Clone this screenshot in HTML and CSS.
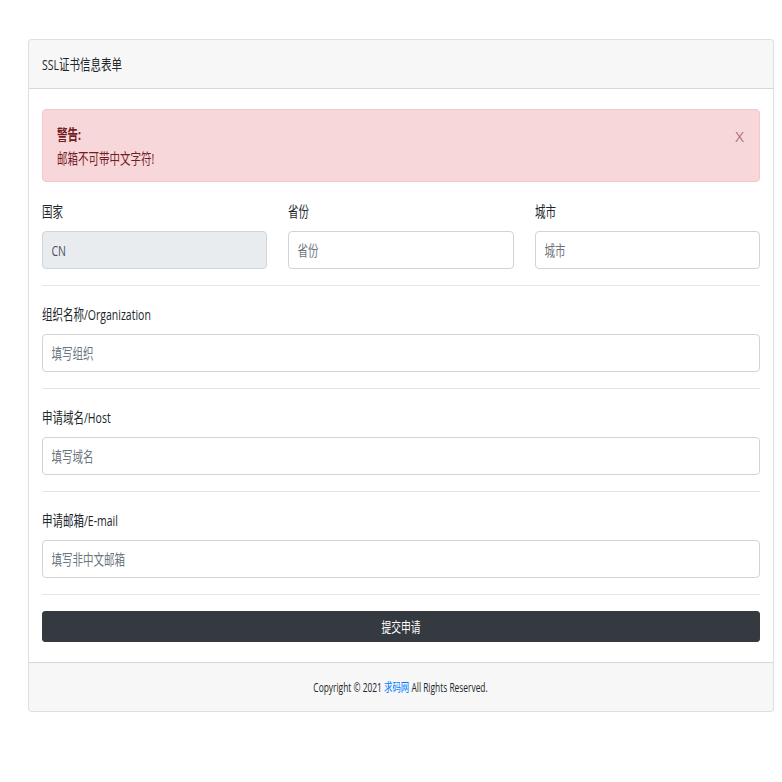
FILE: index.html
```html
<!DOCTYPE html>
<html lang="zh-CN">
<head>
<meta charset="utf-8">
<title>SSL证书信息表单</title>
<link rel="stylesheet" href="styles.css">
</head>
<body>
<div class="card">
  <div class="card-header"><span class="sq">SSL证书信息表单</span></div>
  <form class="card-body">
    <div class="alert">
      <div><strong class="sq">警告:</strong></div>
      <div><span class="sq">邮箱不可带中文字符!</span></div>
      <button type="button" class="close">X</button>
    </div>
    <div class="row3">
      <div class="field">
        <label><span class="sq">国家</span></label>
        <div class="ctl is-disabled"><input type="text" value="CN" disabled></div>
      </div>
      <div class="field">
        <label><span class="sq">省份</span></label>
        <div class="ctl"><input type="text" placeholder="省份"></div>
      </div>
      <div class="field">
        <label><span class="sq">城市</span></label>
        <div class="ctl"><input type="text" placeholder="城市"></div>
      </div>
    </div>
    <hr>
    <div class="field">
      <label><span class="sq">组织名称/Organization</span></label>
      <div class="ctl"><input type="text" placeholder="填写组织"></div>
    </div>
    <hr>
    <div class="field">
      <label><span class="sq">申请域名/Host</span></label>
      <div class="ctl"><input type="text" placeholder="填写域名"></div>
    </div>
    <hr>
    <div class="field">
      <label><span class="sq">申请邮箱/E-mail</span></label>
      <div class="ctl"><input type="text" placeholder="填写非中文邮箱"></div>
    </div>
    <hr>
    <button type="submit" class="submit"><span class="sq mid">提交申请</span></button>
  </form>
  <div class="card-footer"><span class="sq mid">Copyright © 2021 <a href="#">求码网</a> All Rights Reserved.</span></div>
</div>
</body>
</html>
```

FILE: styles.css
```css
html, body {
  margin: 0;
  padding: 0;
  background: #fff;
}

body {
  font-family: "Open Sans", "Noto Sans CJK SC", sans-serif;
  font-size: 15px;
  line-height: 24px;
  color: #212529;
}

/* narrow text rendering, as in the reference */
.sq {
  display: inline-block;
  white-space: nowrap;
  transform: scaleX(0.7);
  transform-origin: 0 50%;
}

.sq.mid {
  transform-origin: 50% 50%;
}

.card {
  margin: 39px 0 0 28px;
  width: 746px;
  box-sizing: border-box;
  border: 1px solid rgba(0, 0, 0, 0.125);
  border-radius: 4px;
  background: #fff;
  overflow: hidden;
}

.card-header {
  padding: 12px 13px;
  background: rgba(0, 0, 0, 0.03);
  border-bottom: 1px solid rgba(0, 0, 0, 0.125);
  font-size: 15px;
  line-height: 24px;
}

.card-body {
  margin: 0;
  padding: 20px 13px;
  display: flex;
  flex-direction: column;
}

.alert {
  position: relative;
  margin-bottom: 17px;
  padding: 12px 14px 11px;
  background: #f8d7da;
  border: 1px solid #f5c6cb;
  border-radius: 4px;
  color: #721c24;
  font-size: 15px;
  line-height: 24px;
}

.alert strong {
  font-weight: 700;
}

.close {
  position: absolute;
  top: 14px;
  right: 15px;
  padding: 0;
  border: 0;
  background: transparent;
  font-family: "Open Sans", sans-serif;
  font-size: 15px;
  line-height: 24px;
  color: #721c24;
  opacity: 0.55;
  cursor: pointer;
}

.row3 {
  display: grid;
  grid-template-columns: 1fr 1fr 1fr;
  column-gap: 21px;
}

.field {
  display: flex;
  flex-direction: column;
}

.field label {
  display: block;
  font-size: 15px;
  line-height: 25px;
  margin-bottom: 7px;
}

.ctl {
  box-sizing: border-box;
  height: 38px;
  border: 1px solid #ced4da;
  border-radius: 4px;
  background: #fff;
  overflow: hidden;
}

.ctl.is-disabled {
  background: #e9ecef;
}

.ctl input {
  display: block;
  box-sizing: border-box;
  width: 100%;
  height: 36px;
  margin: 0;
  padding: 0 12px;
  border: 0;
  background: transparent;
  font-family: "Open Sans", "Noto Sans CJK SC", sans-serif;
  font-size: 15px;
  color: #495057;
  outline: none;
  transform: scaleX(0.7);
  transform-origin: 0 50%;
}

.ctl input::placeholder {
  color: #6c757d;
  opacity: 1;
}

.ctl input:disabled {
  color: #495057;
  -webkit-text-fill-color: #495057;
  opacity: 1;
}

hr {
  width: 100%;
  margin: 16px 0;
  border: 0;
  border-top: 1px solid rgba(0, 0, 0, 0.1);
}

.submit {
  box-sizing: border-box;
  width: 100%;
  height: 31px;
  padding: 4px 6px;
  border: 1px solid #343a40;
  border-radius: 3px;
  background: #343a40;
  color: #fff;
  font-family: "Open Sans", "Noto Sans CJK SC", sans-serif;
  font-size: 14px;
  line-height: 21px;
  cursor: pointer;
}

.card-footer {
  padding: 13px 13px 11px;
  background: rgba(0, 0, 0, 0.03);
  border-top: 1px solid rgba(0, 0, 0, 0.125);
  text-align: center;
  font-size: 12px;
  line-height: 24px;
}

.card-footer a {
  color: #007bff;
  text-decoration: none;
}
```
